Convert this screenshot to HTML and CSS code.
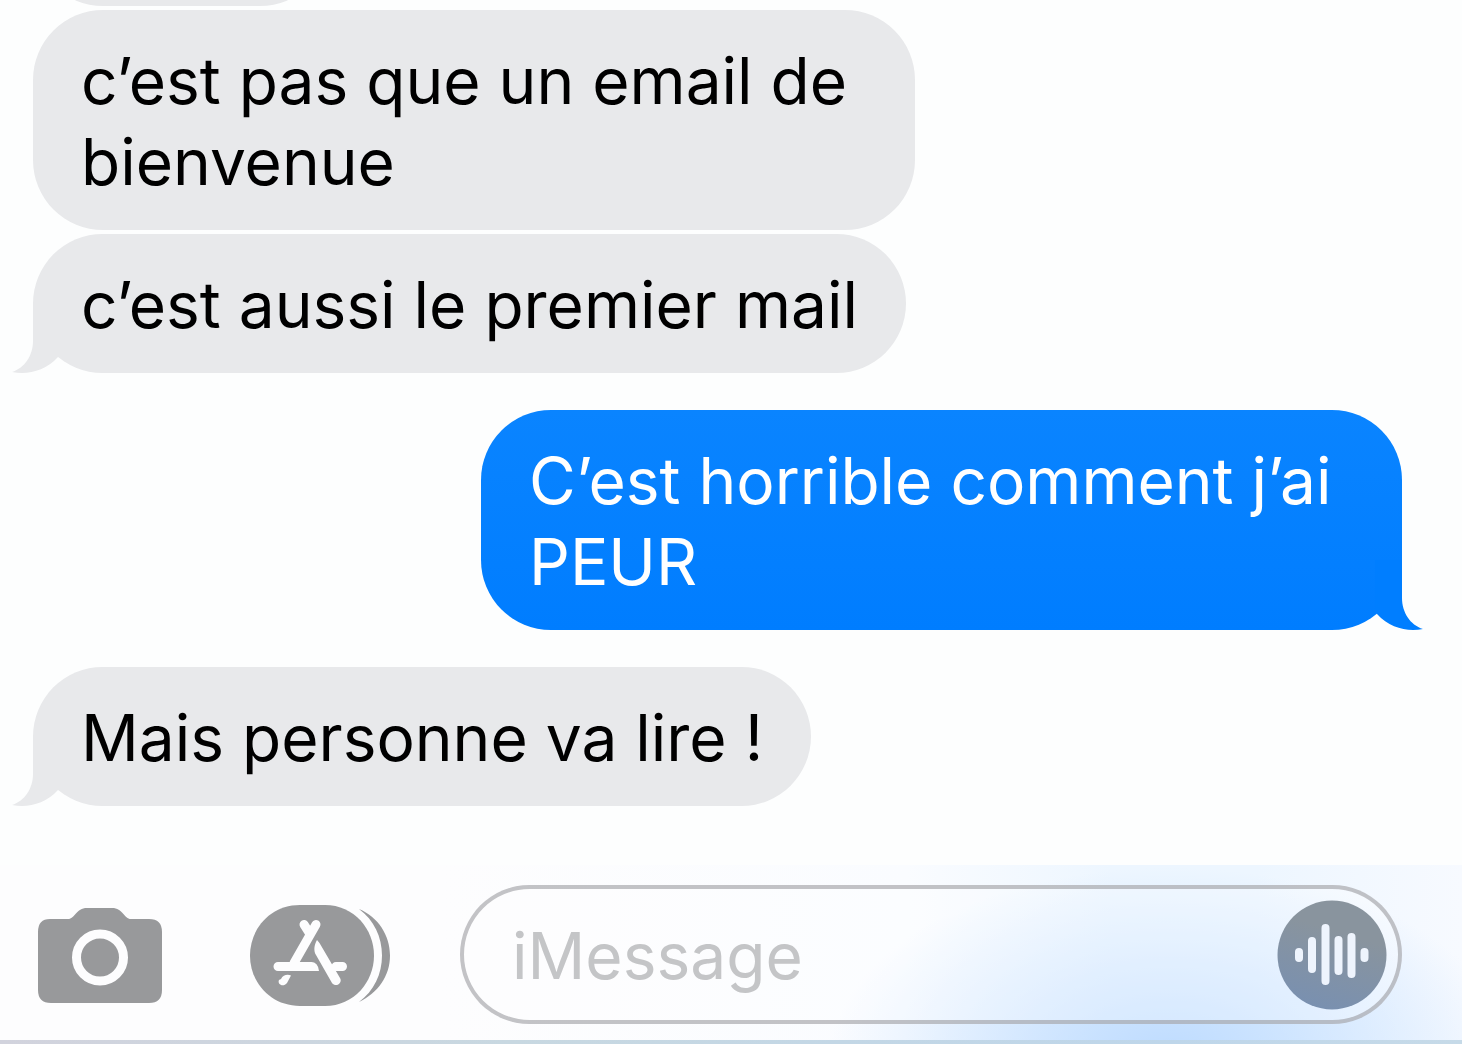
FILE: index.html
```html
<!DOCTYPE html>
<html lang="fr">
<head>
    <meta charset="UTF-8">
    <meta name="viewport" content="width=device-width, initial-scale=1.0">
    <title>Messages</title>
    <link rel="stylesheet" href="styles.css">
</head>
<body>
    <!-- Conversation -->
    <main class="chat">
        <div class="group received">
            <div class="bubble clipped" aria-hidden="true"></div>
            <div class="bubble wrapped">c’est pas que un email de bienvenue</div>
            <div class="bubble">
                c’est aussi le premier mail
                <svg class="tail" viewBox="0 0 48 70" aria-hidden="true"><path d="M21 0V38C21 52 13 65 0 69C16 72 33 68 46 54L48 52V0Z"/></svg>
            </div>
        </div>
        <div class="group sent">
            <div class="bubble">
                C’est horrible comment j’ai PEUR
                <svg class="tail" viewBox="0 0 48 70" aria-hidden="true"><path d="M21 0V38C21 52 13 65 0 69C16 72 33 68 46 54L48 52V0Z"/></svg>
            </div>
        </div>
        <div class="group received">
            <div class="bubble">
                Mais personne va lire !
                <svg class="tail" viewBox="0 0 48 70" aria-hidden="true"><path d="M21 0V38C21 52 13 65 0 69C16 72 33 68 46 54L48 52V0Z"/></svg>
            </div>
        </div>
    </main>

    <!-- Message bar -->
    <form class="composer">
        <button type="button" class="icon-button camera" aria-label="Appareil photo">
            <svg width="124" height="96" viewBox="0 0 124 96">
                <path fill="#98999b" d="M12 12H30C37 12 38 1 49 1H74C85 1 86 12 93 12H111Q124 12 124 25V83Q124 96 111 96H13Q0 96 0 83V25Q0 12 12 12Z"/>
                <circle cx="62" cy="50.500" r="23.500" fill="none" stroke="#fdfdfe" stroke-width="9"/>
            </svg>
        </button>
        <button type="button" class="icon-button apps" aria-label="Apps">
            <svg width="140" height="102" viewBox="0 0 140 102">
                <path fill="#98999b" d="M50 1H75C104 1 124 25 124 51.500S104 102 75 102H50C20 102 0 78 0 51.500S20 1 50 1Z"/>
                <path fill="#98999b" d="M109 5C128 13 140 31 140 51.500S128 89 109 98C124 87 132 70 132 51.500S124 16 109 5Z"/>
                <path fill="none" stroke="#fdfdfe" stroke-width="9" stroke-linecap="round" d="M54 20.500L60 30M66 20.500L44 59M28 62.500H60M86 62.500H92.500"/>
                <path fill="#fdfdfe" d="M58 58H61Q68 58 69 67H58ZM67 36C64 41 63.500 47 66 51L82 79C86 84 93 79 90 74L69.500 39ZM31 75C33 70.500 38 70 41 71.500L37 79C33 84 27 80 29 76Z"/>
            </svg>
        </button>
        <div class="field">
            <input type="text" placeholder="iMessage" aria-label="iMessage">
            <button type="button" class="icon-button" aria-label="Message audio">
                <svg width="110" height="110" viewBox="0 0 110 110">
                    <defs>
                        <linearGradient id="audioFill" x1="0.7" y1="0" x2="0.4" y2="1">
                            <stop offset="0.3" stop-color="#89949e"/>
                            <stop offset="1" stop-color="#7990b0"/>
                        </linearGradient>
                    </defs>
                    <circle cx="55" cy="55" r="54.500" fill="url(#audioFill)"/>
                    <path fill="none" stroke="#eef4fd" stroke-width="8" stroke-linecap="round" d="M22 52V58M35 41V69M48.500 28V81M61.500 40V71M74.500 37V74M87.500 52V58"/>
                </svg>
            </button>
        </div>
    </form>
    <div class="keyboard-edge"></div>
</body>
</html>
```
FILE: styles.css
```css
* { box-sizing: border-box; }

body {
    margin: 0;
    height: 100vh;
    display: flex;
    flex-direction: column;
    background-color: #fdfefe;
    color: #000;
    font-family: Inter, "Liberation Sans", sans-serif;
    font-size: 64px;
    line-height: 81px;
}

/* Conversation, kept scrolled to the latest message */
.chat {
    flex: 1;
    min-height: 0;
    display: flex;
    flex-direction: column;
    justify-content: flex-end;
    gap: 37px;
    padding: 0 60px 59px 33px;
    overflow: hidden;
}
.group { display: flex; flex-direction: column; gap: 4px; }
.received { align-items: flex-start; }
.sent { align-items: flex-end; }

.bubble {
    position: relative;
    max-width: 921px;
    padding: 30px 48px 28px;
    border-radius: 70px;
    background-color: #e8e9eb;
}
.wrapped { max-width: 882px; }
.clipped { width: 297px; height: 140px; }
.sent .bubble { background: linear-gradient(#0a84ff, #007dff); color: #fff; }

/* Bubble tails */
.tail {
    position: absolute;
    left: -21px;
    bottom: 0;
    width: 48px;
    height: 70px;
    fill: #e8e9eb;
}
.sent .tail { left: auto; right: -21px; transform: scaleX(-1); fill: #007eff; }

/* Message bar */
.composer {
    display: flex;
    align-items: center;
    padding: 20px 60px 16px 38px;
    background:
        radial-gradient(ellipse 340px 190px at 80% 110%, #bddbff, rgba(189, 219, 255, 0)),
        linear-gradient(90deg, #fdfdfe 30%, #fafcff 62%, #edf6ff 76%, #edf6ff 86%, #f7faff);
}
.icon-button { flex: none; padding: 0; border: none; background: none; cursor: pointer; }
.icon-button svg { display: block; }
.camera { margin-right: 88px; }
.apps { margin-right: 70px; }
.field {
    flex: 1;
    min-width: 0;
    display: flex;
    align-items: center;
    height: 139px;
    padding: 0 11px 0 48px;
    border: 4px solid rgba(145, 146, 151, 0.55);
    border-radius: 70px;
    background-color: rgba(255, 255, 255, 0.3);
}
.field input {
    flex: 1;
    min-width: 0;
    padding: 2px 0 0;
    border: none;
    outline: none;
    background: none;
    color: #000;
    font: inherit;
}
.field input::placeholder { color: #c4c5c7; opacity: 1; }

/* Top edge of the keyboard */
.keyboard-edge {
    height: 4px;
    background: linear-gradient(90deg, #d2d3dd, #c8d8e1 35%, #bed6ea 80%, #c6dae8);
}
```
